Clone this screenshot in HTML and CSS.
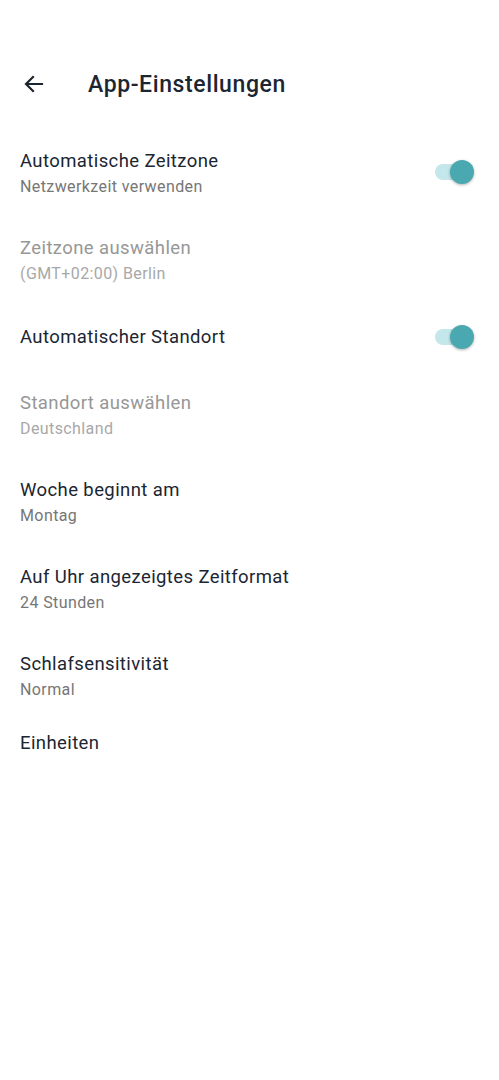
FILE: index.html
```html
<!DOCTYPE html>
<html lang="de">

<head>
    <meta charset="UTF-8">
    <meta name="viewport" content="width=device-width, initial-scale=1.0">
    <title>App-Einstellungen</title>
    <link rel="stylesheet" href="styles.css">
</head>

<body>
    <div class="screen">
        <header class="top-bar">
            <button class="back-btn" aria-label="Zurück">
                <svg width="24" height="24" viewBox="0 0 24 24">
                    <path d="M20 12H4.5M11 5l-7 7 7 7" fill="none" stroke="#1b2530" stroke-width="2.2" stroke-linecap="square" />
                </svg>
            </button>
            <h1 class="top-title">App-Einstellungen</h1>
        </header>

        <ul class="settings">
            <li class="setting">
                <div class="setting-text">
                    <div class="setting-title">Automatische Zeitzone</div>
                    <div class="setting-sub">Netzwerkzeit verwenden</div>
                </div>
                <span class="switch is-on"><span class="switch-thumb"></span></span>
            </li>
            <li class="setting is-disabled">
                <div class="setting-text">
                    <div class="setting-title">Zeitzone auswählen</div>
                    <div class="setting-sub">(GMT+02:00) Berlin</div>
                </div>
            </li>
            <li class="setting single">
                <div class="setting-text">
                    <div class="setting-title">Automatischer Standort</div>
                </div>
                <span class="switch is-on"><span class="switch-thumb"></span></span>
            </li>
            <li class="setting is-disabled">
                <div class="setting-text">
                    <div class="setting-title">Standort auswählen</div>
                    <div class="setting-sub">Deutschland</div>
                </div>
            </li>
            <li class="setting">
                <div class="setting-text">
                    <div class="setting-title">Woche beginnt am</div>
                    <div class="setting-sub">Montag</div>
                </div>
            </li>
            <li class="setting">
                <div class="setting-text">
                    <div class="setting-title">Auf Uhr angezeigtes Zeitformat</div>
                    <div class="setting-sub">24 Stunden</div>
                </div>
            </li>
            <li class="setting">
                <div class="setting-text">
                    <div class="setting-title">Schlafsensitivität</div>
                    <div class="setting-sub">Normal</div>
                </div>
            </li>
            <li class="setting single setting-last">
                <div class="setting-text">
                    <div class="setting-title">Einheiten</div>
                </div>
            </li>
        </ul>
    </div>
</body>

</html>
```

FILE: styles.css
```css
body {
    margin: 0;
    background: #fff;
    font-family: Roboto, 'Noto Sans', sans-serif;
    color: #1b2530;
}

.screen {
    padding-top: 56px;
}

.top-bar {
    display: flex;
    align-items: center;
    height: 56px;
}

.back-btn {
    display: flex;
    align-items: center;
    justify-content: center;
    width: 24px;
    height: 24px;
    margin-left: 22px;
    padding: 0;
    border: 0;
    background: none;
}

.top-title {
    margin: 0 0 0 42px;
    font-size: 23px;
    font-weight: 500;
    letter-spacing: 0.6px;
    color: #1b2632;
}

.settings {
    list-style: none;
    margin: 15px 0 0;
    padding: 0;
}

.setting {
    display: flex;
    align-items: center;
    padding: 21px 31px 18px 20px;
    min-height: 26px;
}

.setting.single {
    padding-top: 23px;
    padding-bottom: 19px;
}

.setting-text {
    flex: 1;
}

.setting-title {
    font-size: 18.5px;
    line-height: 26px;
    letter-spacing: 0.4px;
    color: #1b2632;
}

.setting-sub {
    margin-top: 3px;
    font-size: 16px;
    line-height: 19px;
    letter-spacing: 0.4px;
    color: #767676;
}

.is-disabled .setting-title {
    color: #979797;
}

.is-disabled .setting-sub {
    color: #a8a8a8;
}

.setting.setting-last {
    padding-top: 13px;
}

.switch {
    position: relative;
    width: 33px;
    height: 16px;
    border-radius: 8px;
    background: #c3e7ea;
}

.switch-thumb {
    position: absolute;
    top: -4px;
    right: -6px;
    width: 24px;
    height: 24px;
    border-radius: 50%;
    background: #4aa8b1;
    box-shadow: 0 1px 3px rgba(0, 0, 0, 0.3);
}
```
